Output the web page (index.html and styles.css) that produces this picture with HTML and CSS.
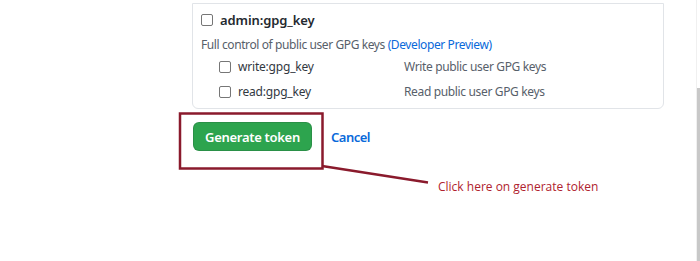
FILE: index.html
```html
<!DOCTYPE html>
<html lang="en">
<head>
    <meta charset="UTF-8">
    <title>Generate token</title>
    <link rel="stylesheet" href="styles.css">
</head>
<body>
    <div class="page">
        <div class="scope-card">
            <div class="scope-row main">
                <span class="check"></span>
                <span class="scope-name">admin:gpg_key</span>
            </div>
            <p class="scope-desc">Full control of public user GPG keys <a href="#">(Developer Preview)</a></p>
            <ul class="sub-scopes">
                <li>
                    <span class="check"></span>
                    <span class="sub-name">write:gpg_key</span>
                    <span class="sub-desc">Write public user GPG keys</span>
                </li>
                <li>
                    <span class="check"></span>
                    <span class="sub-name">read:gpg_key</span>
                    <span class="sub-desc">Read public user GPG keys</span>
                </li>
            </ul>
        </div>
        <div class="actions">
            <button class="btn-generate">Generate token</button>
            <a class="cancel" href="#">Cancel</a>
        </div>
    </div>

    <!-- annotation drawn on top of the screenshot -->
    <svg class="annotation" width="700" height="261" viewBox="0 0 700 261">
        <rect x="180" y="113.5" width="142.5" height="55" fill="none" stroke="#8a1a2c" stroke-width="2.5"/>
        <line x1="322" y1="166" x2="428" y2="182.5" stroke="#8a1a2c" stroke-width="2.5"/>
    </svg>
    <div class="note">Click here on generate token</div>

    <div class="scrollbar"><div class="thumb"></div></div>
</body>
</html>
```

FILE: styles.css
```css
* {
    box-sizing: border-box;
    margin: 0;
    padding: 0;
}

body {
    background: #fff;
    font-family: 'Noto Sans', 'Open Sans', sans-serif;
    color: #24292f;
    overflow: hidden;
}

.page {
    padding-left: 192px;
    padding-top: 3px;
}

.scope-card {
    width: 472px;
    border: 1px solid #e1e4e8;
    border-radius: 0 0 6px 6px;
    padding: 9px 8px 4px 8px;
}

.check {
    display: inline-block;
    width: 12px;
    height: 12px;
    border: 1px solid #767676;
    border-radius: 2px;
    background: #fff;
    flex: none;
}

.scope-row {
    display: flex;
    align-items: center;
    gap: 7px;
    height: 14px;
}

.scope-name {
    font-size: 13px;
    font-weight: 600;
    letter-spacing: -0.1px;
}

.scope-desc {
    margin-top: 10px;
    font-size: 12px;
    color: #57606a;
    line-height: 16px;
    letter-spacing: -0.4px;
}

.scope-desc a {
    color: #0969da;
    text-decoration: none;
}

.sub-scopes {
    list-style: none;
    padding-left: 18px;
    margin-top: 1px;
}

.sub-scopes li {
    display: flex;
    align-items: center;
    height: 25px;
    font-size: 12px;
    color: #57606a;
}

.sub-scopes .check {
    margin-right: 7px;
}

.sub-name {
    width: 166px;
    color: #32383f;
    letter-spacing: -0.2px;
}

.sub-desc {
    letter-spacing: -0.35px;
}

.actions {
    display: flex;
    align-items: center;
    gap: 19px;
    padding-left: 1px;
    margin-top: 13px;
}

.btn-generate {
    width: 119px;
    height: 29px;
    border: 1px solid rgba(27, 31, 36, 0.15);
    border-radius: 6px;
    background: #2da44e;
    color: #fff;
    font-family: inherit;
    font-size: 13px;
    font-weight: 600;
    letter-spacing: -0.3px;
    cursor: pointer;
}

.cancel {
    color: #0969da;
    font-size: 13px;
    font-weight: 600;
    letter-spacing: -0.5px;
    text-decoration: none;
}

.annotation {
    position: absolute;
    left: 0;
    top: 0;
    pointer-events: none;
}

.note {
    position: absolute;
    left: 438px;
    top: 178px;
    font-family: 'Open Sans', sans-serif;
    font-size: 12px;
    color: #b0222e;
}

.scrollbar {
    position: absolute;
    right: 0;
    top: 0;
    width: 4px;
    height: 261px;
    border-left: 1px solid #f0f0f0;
}

.scrollbar .thumb {
    margin-top: 88px;
    height: 173px;
    background: #c8c8c8;
}
```
